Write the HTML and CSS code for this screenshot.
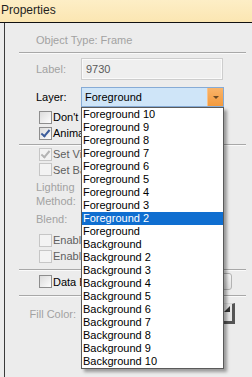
FILE: index.html
```html
<!doctype html>
<html lang="en">
  <head>
    <title>Properties</title>
    <meta charset="utf-8" />
    <link rel="stylesheet" href="styles.css">
  </head>

  <body>
    <div class="titlebar">Properties</div>

    <div class="panel">
      <div class="row type">Object Type: Frame</div>
      <div class="sep"></div>

      <div class="row field">
        <span class="lbl">Label:</span>
        <div class="textbox">9730</div>
      </div>

      <div class="row field layer">
        <span class="lbl dark">Layer:</span>
        <div class="select">
          <span class="select-text">Foreground</span>
          <span class="select-btn"><i class="arrow"></i></span>

          <!-- open dropdown list -->
          <ul class="dropdown">
            <li>Foreground 10</li>
            <li>Foreground 9</li>
            <li>Foreground 8</li>
            <li>Foreground 7</li>
            <li>Foreground 6</li>
            <li>Foreground 5</li>
            <li>Foreground 4</li>
            <li>Foreground 3</li>
            <li class="active">Foreground 2</li>
            <li>Foreground</li>
            <li>Background</li>
            <li>Background 2</li>
            <li>Background 3</li>
            <li>Background 4</li>
            <li>Background 5</li>
            <li>Background 6</li>
            <li>Background 7</li>
            <li>Background 8</li>
            <li>Background 9</li>
            <li>Background 10</li>
          </ul>
        </div>
      </div>

      <div class="checks first">
        <label class="check"><span class="box"></span>Don't show</label>
        <label class="check"><span class="box on"></span>Animate</label>
      </div>
      <div class="sep tight"></div>

      <div class="checks">
        <label class="check off"><span class="box on"></span>Set Visible</label>
        <label class="check off short"><span class="box"></span>Set Background</label>
      </div>

      <div class="row two-line">Lighting<br>Method:</div>
      <div class="row blend">Blend:</div>

      <div class="checks enable">
        <label class="check off"><span class="box"></span>Enable lighting</label>
        <label class="check off"><span class="box"></span>Enable blending</label>
      </div>
      <div class="sep mid"></div>

      <div class="checks data">
        <label class="check"><span class="box"></span>Data Bound</label>
        <span class="data-btn"></span>
      </div>
      <div class="sep mid"></div>

      <div class="fill">
        <span class="fill-lbl">Fill Color:</span>
        <span class="color-btn"><i class="corner"></i></span>
      </div>
    </div>
  </body>
</html>
```

FILE: styles.css
```css
*{
  margin: 0;
  padding: 0;
  box-sizing: border-box;
}

body{
  width: 252px;
  height: 377px;
  overflow: hidden;
  background-color: #ececec;
  font-family: "Liberation Sans", Arial, sans-serif;
  font-size: 11px;
  color: #000;
}

.titlebar{
  height: 23px;
  padding-left: 1px;
  line-height: 21px;
  font-size: 12px;
  color: #1e1e1e;
  background: linear-gradient(#fdeec6, #fbe6b2);
  border-bottom: 1px solid #111;
}

.panel{
  margin-left: 4px;
  height: 354px;
  border-left: 1px solid #3a3a3a;
  padding: 10px 6px 0 14px;
}

.row{
  padding-left: 17px;
  color: #a2a2a2;
}

.type{
  height: 15px;
  line-height: 15px;
}

.sep{
  margin-top: 4px;
  height: 2px;
  border-top: 1px solid #a8a8a8;
  border-bottom: 1px solid #fafafa;
}

.sep.tight{
  margin-top: 3px;
}

.sep.mid{
  margin-top: 5px;
}

.field{
  display: flex;
  align-items: center;
  margin-top: 4px;
  height: 22px;
}

.lbl{
  width: 45px;
}

.lbl.dark{
  color: #000;
}

.textbox{
  width: 142px;
  height: 22px;
  line-height: 20px;
  padding-left: 4px;
  color: #5a5a5a;
  background-color: #efefef;
  border: 1px solid #cdcdcd;
  box-shadow: inset 0 0 0 1px #fafafa;
}

.layer{
  margin-top: 7px;
  height: 20px;
}

.select{
  position: relative;
  width: 143px;
  height: 20px;
  background-color: #cfe5f8;
  border: 1px solid #86abd6;
  display: flex;
  align-items: center;
}

.select-text{
  flex: 1;
  padding-left: 3px;
  line-height: 18px;
  color: #000;
}

.select-btn{
  width: 16px;
  height: 18px;
  background: linear-gradient(#f9b46a, #f39a3d);
  border-left: 1px solid #f7c28c;
  display: flex;
  align-items: center;
  justify-content: center;
}

.arrow{
  width: 0;
  height: 0;
  border-left: 3px solid transparent;
  border-right: 3px solid transparent;
  border-top: 3px solid #6b4a25;
}

.dropdown{
  position: absolute;
  left: -1px;
  top: 19px;
  width: 143px;
  list-style: none;
  background-color: #fff;
  border: 1px solid #5a5a5a;
  box-shadow: 3px 3px 3px rgba(0,0,0,0.35);
  z-index: 5;
}

.dropdown li{
  height: 13px;
  line-height: 13px;
  padding-left: 1px;
  color: #000;
  white-space: nowrap;
}

.dropdown li.active{
  background-color: #0f6ed0;
  color: #fff;
}

.checks{
  padding-left: 20px;
}

.checks.first{
  margin-top: 2px;
}

.check{
  display: flex;
  align-items: center;
  height: 16px;
  white-space: nowrap;
  color: #000;
}

.check.short{
  height: 15px;
}

.check.off{
  color: #5f5f5f;
}

.box{
  flex: none;
  position: relative;
  width: 13px;
  height: 13px;
  margin-right: 1px;
  border: 1px solid #8d8d8d;
  background: linear-gradient(135deg, #dcdcdc, #fdfdfd);
}

.check.off .box{
  border-color: #c6c6c6;
  background: #f3f3f3;
}

.box.on::after{
  content: "";
  position: absolute;
  left: 3px;
  top: 0;
  width: 3px;
  height: 7px;
  border-right: 2px solid #3c5d9c;
  border-bottom: 2px solid #3c5d9c;
  transform: rotate(40deg);
}

.check.off .box.on::after{
  border-color: #b4b4b4;
}

.two-line{
  margin-top: 3px;
  line-height: 14px;
}

.blend{
  margin-top: 4px;
  line-height: 14px;
}

.checks.enable{
  margin-top: 6px;
}

.checks.data{
  margin-top: 2px;
  height: 17px;
  display: flex;
  align-items: center;
  justify-content: space-between;
  padding-right: 14px;
}

.data-btn{
  width: 60px;
  height: 17px;
  border: 1px solid #b3b3b3;
  border-radius: 3px;
  background: linear-gradient(#f6f6f6, #e2e2e2);
}

.fill{
  margin-top: 6px;
  height: 21px;
  display: flex;
  align-items: center;
}

.fill-lbl{
  width: 57px;
  text-align: right;
  color: #a2a2a2;
}

.color-btn{
  position: relative;
  margin-left: 5px;
  width: 154px;
  height: 21px;
  background-color: #e6e6e6;
  border: 1px solid #d8d8d8;
  border-right: 3px solid #555;
  border-bottom: 3px solid #555;
}

.corner{
  position: absolute;
  right: 2px;
  top: 2px;
  width: 0;
  height: 0;
  border-left: 6px solid transparent;
  border-bottom: 6px solid #333;
}
```
